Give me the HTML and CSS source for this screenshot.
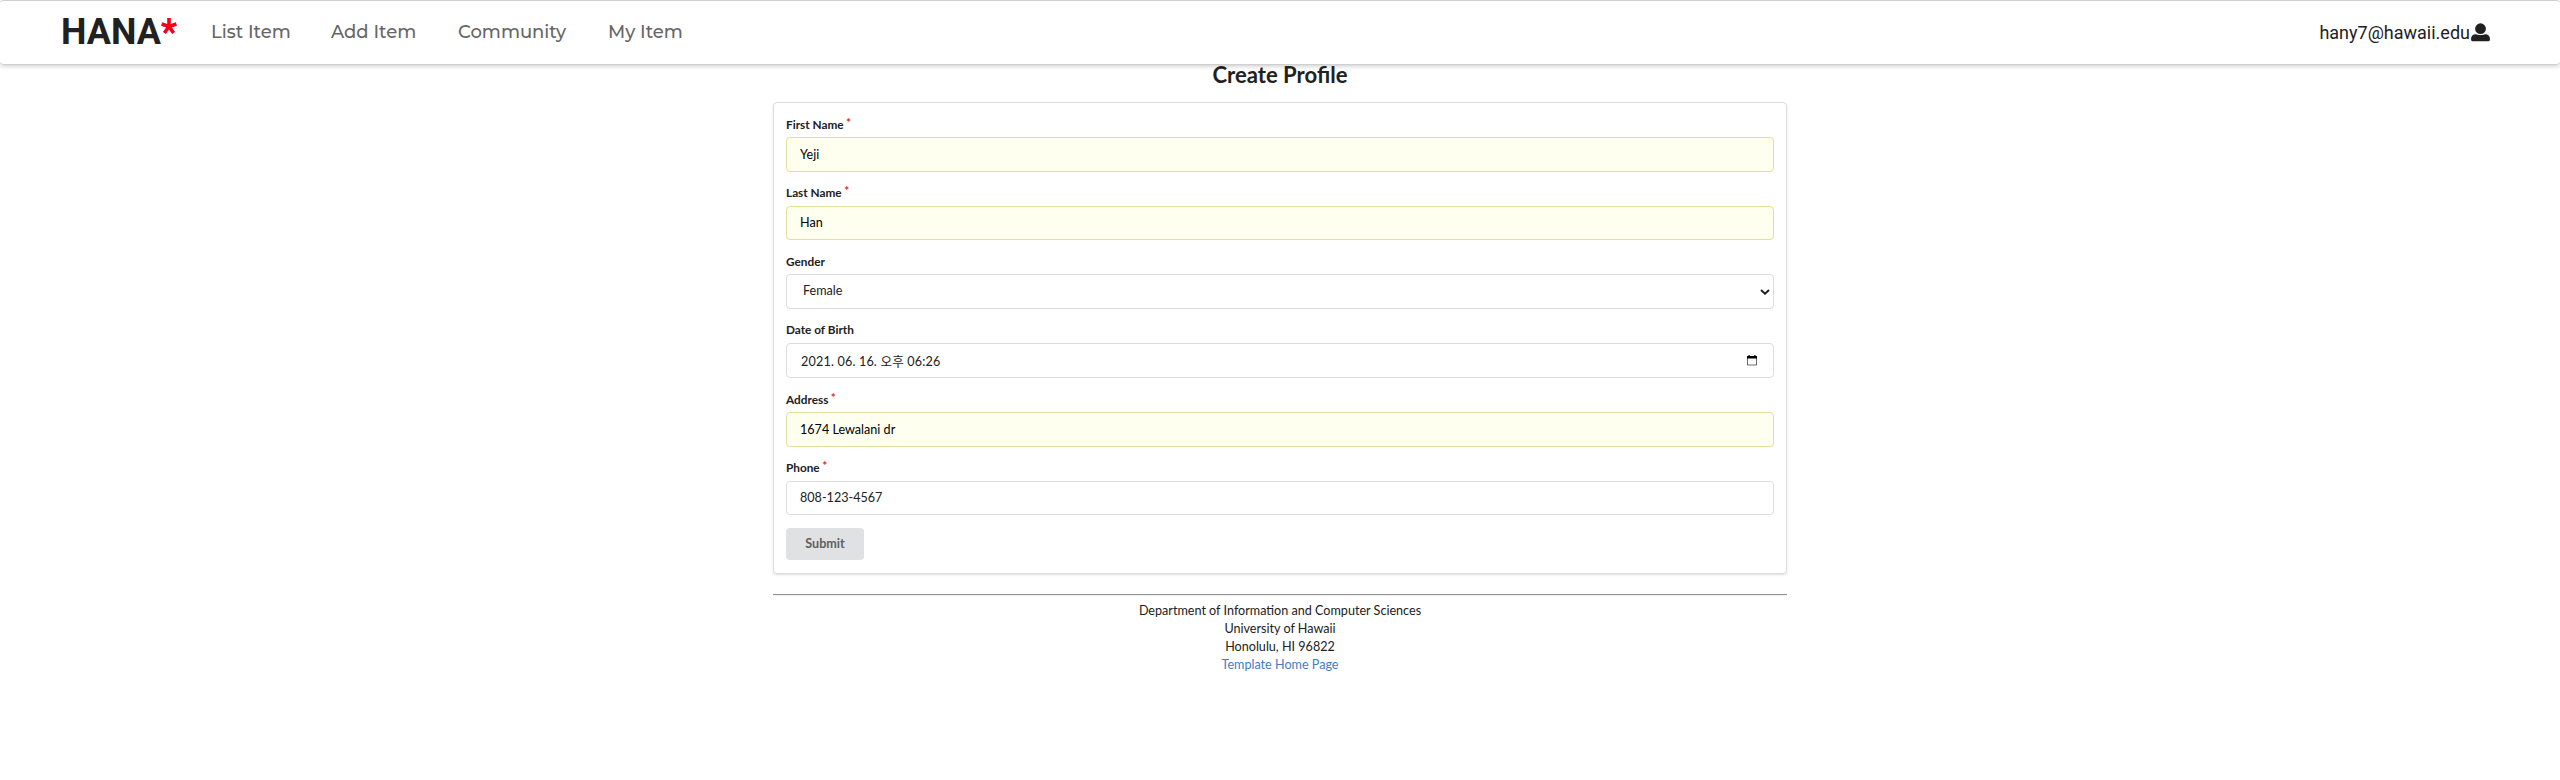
FILE: index.html
```html
<!DOCTYPE html>
<html lang="en">
<head>
<meta charset="utf-8">
<title>Create Profile</title>
<link rel="stylesheet" href="styles.css">
</head>
<body>
<nav class="navbar">
  <a class="logo">HANA<svg class="star" viewBox="0 0 16 17"><path d="M8 8.5V0M8 8.5L.6 6M8 8.5L15.4 6M8 8.5L3.4 15M8 8.5L12.6 15"/></svg></a>
  <div class="links">
    <a class="link list">List Item</a>
    <a class="link add">Add Item</a>
    <a class="link community">Community</a>
    <a class="link mine">My Item</a>
  </div>
  <div class="user"><span>hany7@hawaii.edu</span><svg class="user-icon" viewBox="0 0 19 19"><circle cx="9.5" cy="5.7" r="5.4"/><path d="M0 16.2c0-3 2-4.900 4.600-4.900 1.800 0 2.600.8 4.900.8s3.100-.8 4.900-.8c2.600 0 4.600 1.900 4.600 4.900 0 1.500-.8 2.100-2 2.100H2c-1.200 0-2-.6-2-2.100z"/></svg></div>
</nav>
<main class="container">
  <h2 class="title">Create Profile</h2>
  <form class="segment">
    <div class="field"><label class="required">First Name</label><input class="control filled" type="text" value="Yeji"></div>
    <div class="field"><label class="required">Last Name</label><input class="control filled" type="text" value="Han"></div>
    <div class="field"><label>Gender</label>
      <div class="control select"><span>Female</span><svg class="chevron" viewBox="0 0 10 6"><path d="M1 1l4 3.700L9 1"/></svg></div></div>
    <div class="field"><label>Date of Birth</label>
      <div class="control date"><span>2021. 06. 16. 오후 06:26</span><svg class="calendar" viewBox="0 0 10 11"><path class="frame" d="M.5 1.500h9v8.500h-9z"/><path d="M0 1h10v2.500H0zM1.500 0h1.200v1H1.500zM7.300 0h1.200v1H7.300z"/></svg></div></div>
    <div class="field"><label class="required">Address</label><input class="control filled" type="text" value="1674 Lewalani dr"></div>
    <div class="field"><label class="required">Phone</label><input class="control" type="text" value="808-123-4567"></div>
    <button class="submit" type="button">Submit</button>
  </form>
  <footer class="footer">
    <hr class="rule">
    <div>Department of Information and Computer Sciences</div>
    <div>University of Hawaii</div>
    <div>Honolulu, HI 96822</div>
    <a class="home">Template Home Page</a>
  </footer>
</main>
</body>
</html>
```
FILE: styles.css
```css
* { box-sizing: border-box; }
body {
  margin: 0;
  background: #fff;
  color: #212121;
  font: 12.6px/18px Lato, "Noto Sans CJK KR", sans-serif;
}
.navbar {
  display: flex;
  align-items: center;
  height: 65px;
  padding: 0 70px 0 61px;
  border: 1px solid #d0d0d0;
  border-width: 1px 0;
  border-radius: 4px;
  box-shadow: 0 1px 5px rgba(0, 0, 0, .22);
}
.logo {
  display: flex;
  align-items: center;
  width: 150px;
  padding-bottom: 2px;
  color: #212121;
  font: 700 36px/60px Roboto, sans-serif;
}
.star {
  width: 16px;
  height: 17px;
  margin-bottom: 10px;
  fill: none;
  stroke: #f8001c;
  stroke-width: 3.6;
}
.links { display: flex; flex: 1; padding-bottom: 2px; }
.link {
  color: #666;
  font: 500 18px/60px Montserrat, Inter, sans-serif;
  white-space: nowrap;
}
.list { width: 120px; }
.add { width: 127px; }
.community { width: 150px; }
.user {
  display: flex;
  align-items: center;
  gap: 1px;
  font: 18px/62px Roboto, sans-serif;
}
.user-icon { width: 19px; height: 19px; fill: #212121; }
.container { width: 1014px; margin: 0 auto; }
.title {
  height: 37px;
  margin: 0;
  font: 700 22.1px/20px Lato, sans-serif;
  text-align: center;
}
.segment {
  display: grid;
  grid-template-rows: 57px 68px 69px 69px 69px 68px 45px;
  height: 472px;
  padding: 12px;
  border: 1px solid #dcdddd;
  border-radius: 4px;
  box-shadow: 0 1px 2px rgba(34, 36, 38, .15);
}
.field {
  display: flex;
  flex-direction: column;
  justify-content: flex-end;
}
label {
  margin-bottom: 4px;
  font-size: 11.8px;
  font-weight: 700;
  line-height: 17px;
}
.field:nth-child(even) label { margin-bottom: 5px; }
.required::after {
  content: "*";
  margin-left: 2.5px;
  color: #db2828;
  vertical-align: top;
  line-height: 13px;
}
.control {
  width: 100%;
  height: 35px;
  padding: 0 13px;
  border: 1px solid #dcdddd;
  border-radius: 4px;
  outline: 0;
  background: #fff;
  color: #212121;
  font: 12.6px/32px Lato, "Noto Sans CJK KR", sans-serif;
}
.field:nth-child(2) .control, .field:nth-child(6) .control { height: 34px; padding-bottom: 1px; }
.filled { border-color: #e0e09b; background: #fffff0; color: #000; }
.select, .date { display: flex; justify-content: space-between; align-items: center; }
.select { padding: 0 3px 2px 16px; }
.chevron { width: 10px; height: 6px; margin-top: 2px; fill: none; stroke: #212121; stroke-width: 2; }
.date { padding: 3px 16px 0 14px; }
.date span { letter-spacing: .17px; }
.calendar { width: 10px; height: 11px; margin-bottom: 4px; }
.frame { fill: none; stroke: #666; }
.submit {
  align-self: end;
  width: 78px;
  height: 32px;
  padding: 0;
  border: 0;
  border-radius: 4px;
  background: #e0e1e2;
  color: #606060;
  font: 700 12.6px/30px Lato, sans-serif;
}
.footer { padding-top: 20px; text-align: center; }
.rule {
  height: 2px;
  margin: 0 0 6px;
  border: 0;
  border-top: 1px solid #929292;
  border-bottom: 1px solid #eee;
}
.home { color: #3f7cc8; }
```
